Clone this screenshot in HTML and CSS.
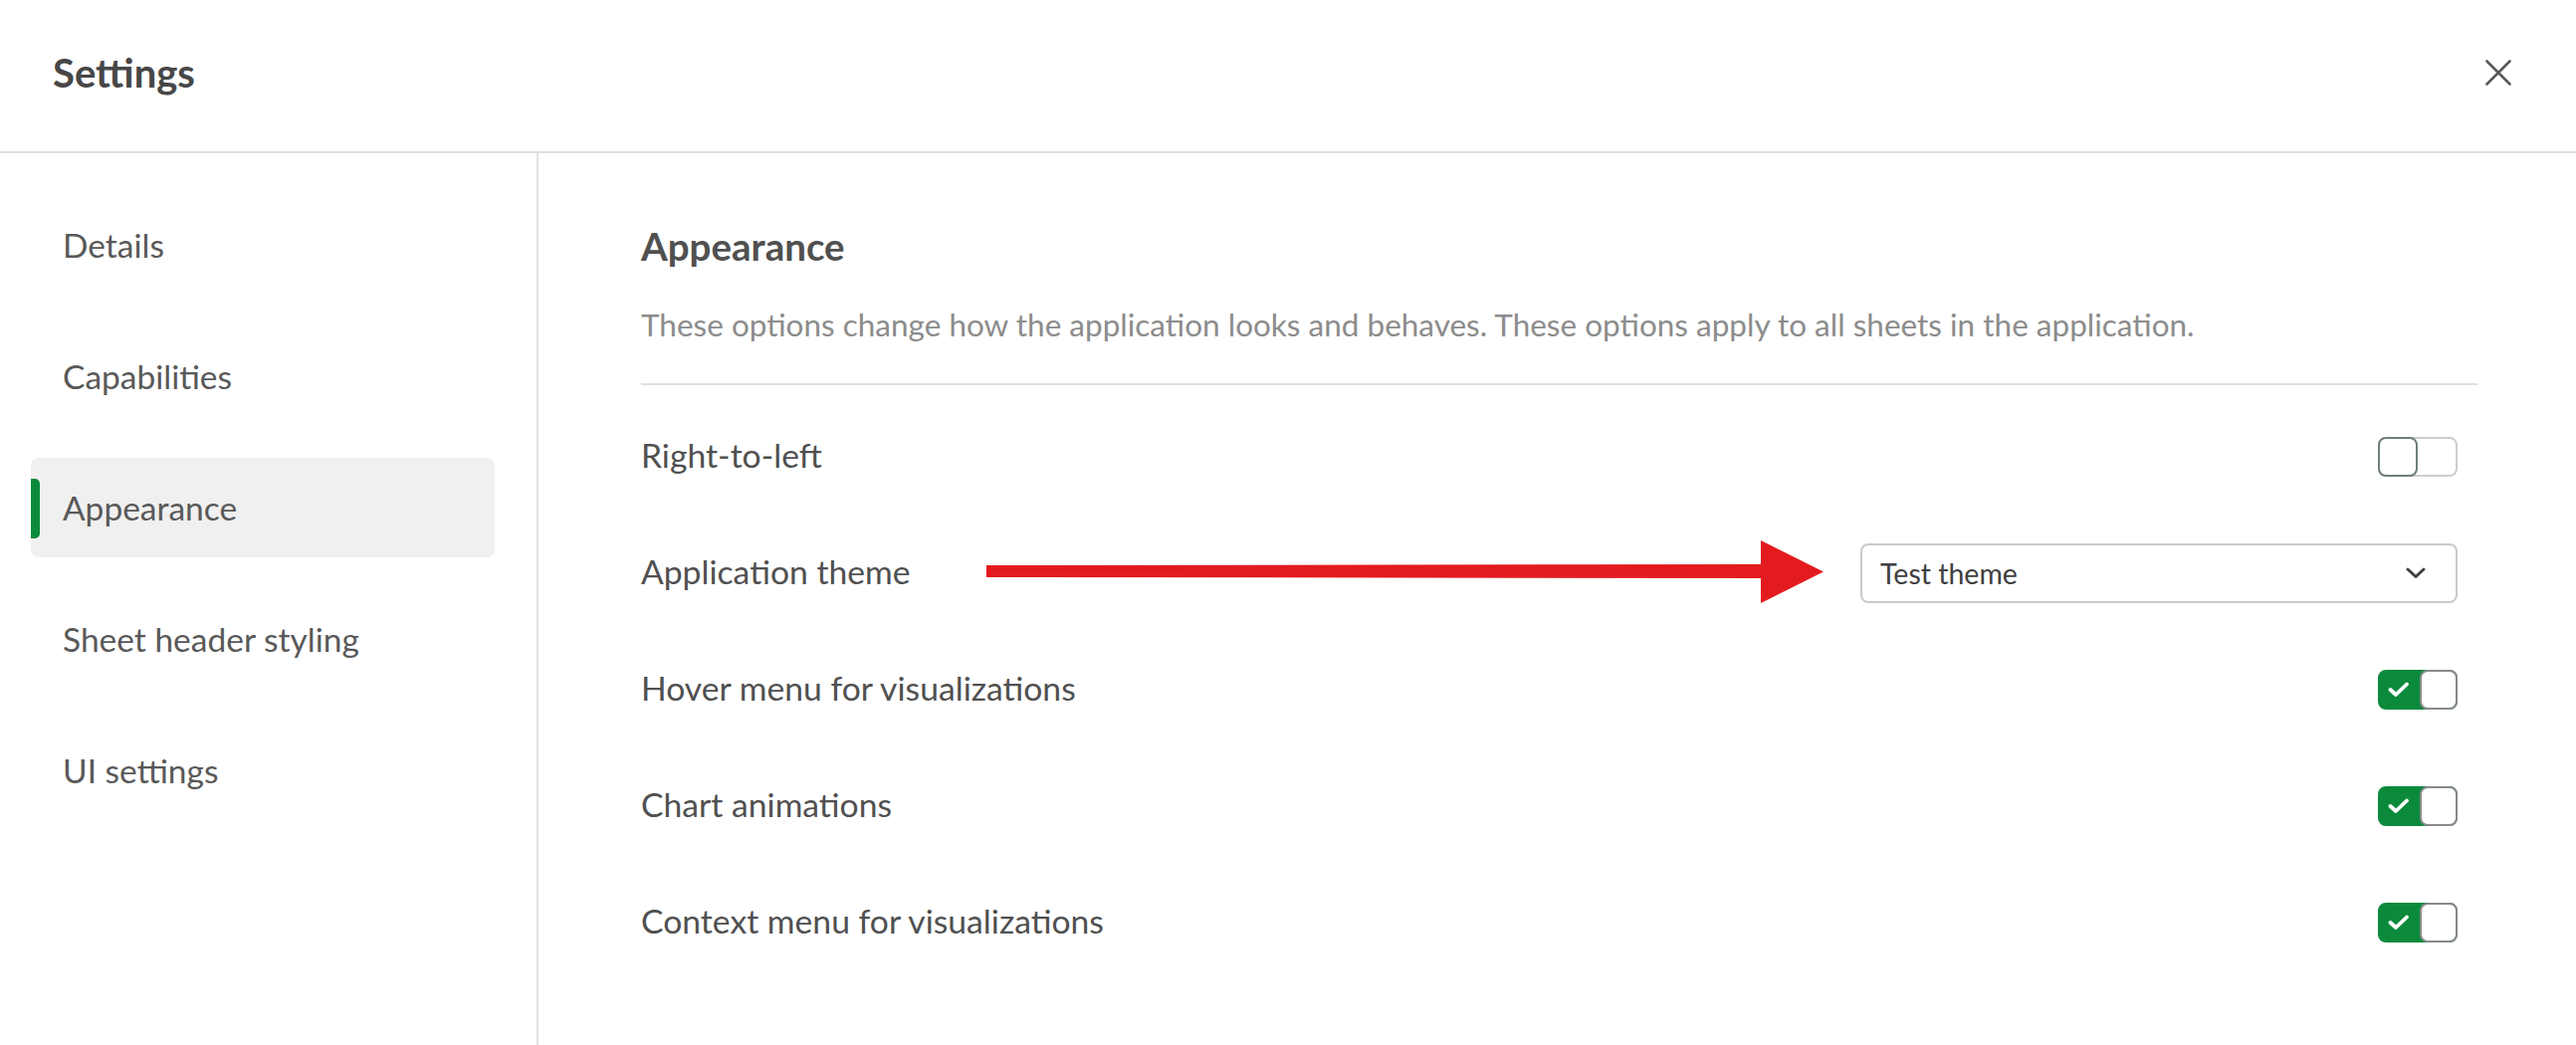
FILE: index.html
```html
<!DOCTYPE html>
<html>
<head>
    <title>Settings</title>
    <meta name="viewport" content="width=device-width, initial-scale=1">
    <link rel="stylesheet" href="styles.css">
</head>

<body>
    <div class="dialog">
        <header class="dialog-header">
            <h1>Settings</h1>
            <button class="close-btn" type="button" aria-label="Close">
                <svg width="26" height="26" viewBox="0 0 26 26">
                    <path d="M1.5 1.5 L24.5 24.5 M24.5 1.5 L1.5 24.5" stroke="#595959" stroke-width="2.6" stroke-linecap="round"/>
                </svg>
            </button>
        </header>

        <div class="dialog-body">
            <nav class="sidebar">
                <div class="nav-item">Details</div>
                <div class="nav-item">Capabilities</div>
                <div class="nav-item active">Appearance</div>
                <div class="nav-item">Sheet header styling</div>
                <div class="nav-item">UI settings</div>
            </nav>

            <main class="content">
                <div class="section-head">
                    <h2>Appearance</h2>
                    <p>These options change how the application looks and behaves. These options apply to all sheets in the application.</p>
                </div>

                <div class="row">
                    <span class="label">Right-to-left</span>
                    <span class="toggle"><span class="knob"></span></span>
                </div>

                <div class="row">
                    <span class="label">Application theme</span>
                    <svg class="pointer" width="841" height="63" viewBox="0 0 841 63">
                        <path d="M0 25 L786 24 L786 38 L0 37 Z" fill="#e31b1f"/>
                        <path d="M778 0 L841 31.5 L778 63 Z" fill="#e31b1f"/>
                    </svg>
                    <div class="select">
                        <span>Test theme</span>
                        <svg width="20" height="12" viewBox="0 0 20 12">
                            <path d="M2 2 L10 9.5 L18 2" fill="none" stroke="#404040" stroke-width="3" stroke-linecap="round" stroke-linejoin="round"/>
                        </svg>
                    </div>
                </div>

                <div class="row">
                    <span class="label">Hover menu for visualizations</span>
                    <span class="toggle on">
                        <span class="check"><svg width="22" height="17" viewBox="0 0 22 17"><path d="M2.5 9 L8 14 L19 3.5" fill="none" stroke="#fff" stroke-width="3.8" stroke-linecap="round" stroke-linejoin="round"/></svg></span>
                        <span class="knob"></span>
                    </span>
                </div>

                <div class="row">
                    <span class="label">Chart animations</span>
                    <span class="toggle on">
                        <span class="check"><svg width="22" height="17" viewBox="0 0 22 17"><path d="M2.5 9 L8 14 L19 3.5" fill="none" stroke="#fff" stroke-width="3.8" stroke-linecap="round" stroke-linejoin="round"/></svg></span>
                        <span class="knob"></span>
                    </span>
                </div>

                <div class="row">
                    <span class="label">Context menu for visualizations</span>
                    <span class="toggle on">
                        <span class="check"><svg width="22" height="17" viewBox="0 0 22 17"><path d="M2.5 9 L8 14 L19 3.5" fill="none" stroke="#fff" stroke-width="3.8" stroke-linecap="round" stroke-linejoin="round"/></svg></span>
                        <span class="knob"></span>
                    </span>
                </div>
            </main>
        </div>
    </div>
</body>
</html>
```

FILE: styles.css
```css
body {
    margin: 0;
    font-family: Lato, "Liberation Sans", sans-serif;
    color: #404040;
    background: #fff;
}

.dialog {
    display: flex;
    flex-direction: column;
    height: 1050px;
}

.dialog-header {
    display: flex;
    align-items: center;
    justify-content: space-between;
    height: 154px;
    box-sizing: border-box;
    padding: 0 65px 6px 53px;
    border-bottom: 2px solid #e0e0e0;
}

.dialog-header h1 {
    margin: 0;
    font-size: 40px;
    font-weight: 700;
    color: #474747;
}

.close-btn {
    background: none;
    border: none;
    padding: 0;
    display: flex;
    cursor: pointer;
}

.dialog-body {
    display: flex;
    flex: 1;
}

.sidebar {
    width: 541px;
    box-sizing: border-box;
    border-right: 2px solid #e0e0e0;
    padding: 42px 42px 0 31px;
    display: flex;
    flex-direction: column;
    gap: 32px;
}

.nav-item {
    height: 100px;
    display: flex;
    align-items: center;
    padding-left: 32px;
    font-size: 33.5px;
    color: #595959;
    border-radius: 8px;
    position: relative;
}

.nav-item.active {
    background: #f0f0f0;
}

.nav-item.active::before {
    content: "";
    position: absolute;
    left: 0;
    top: 21px;
    width: 9px;
    height: 60px;
    border-radius: 0 5px 5px 0;
    background: #0c8a3c;
}

.content {
    flex: 1;
    padding: 69px 99px 0 103px;
}

.section-head {
    border-bottom: 2px solid #e0e0e0;
    padding-bottom: 39px;
    margin-bottom: 13px;
}

.section-head h2 {
    margin: 0;
    font-size: 38.5px;
    line-height: 48px;
    font-weight: 700;
    color: #505050;
}

.section-head p {
    margin: 35px 0 0;
    font-size: 31.5px;
    line-height: 40px;
    color: #8c8c8c;
}

.row {
    height: 117px;
    display: flex;
    align-items: center;
    justify-content: space-between;
    padding-right: 20px;
    position: relative;
}

.label {
    font-size: 33.7px;
    color: #505050;
    margin-top: -3px;
}

.pointer {
    position: absolute;
    left: 347px;
    top: 26px;
}

.select {
    width: 600px;
    height: 60px;
    box-sizing: border-box;
    border: 2px solid #cacaca;
    border-radius: 8px;
    display: flex;
    align-items: center;
    justify-content: space-between;
    padding: 0 30px 0 18px;
    font-size: 28.5px;
    color: #404040;
}

.toggle {
    width: 80px;
    height: 40px;
    box-sizing: border-box;
    border: 2px solid #cdcdcd;
    border-radius: 8px;
    background: #fff;
    display: flex;
}

.toggle .knob {
    width: 40px;
    height: 40px;
    box-sizing: border-box;
    margin: -2px 0 -2px -2px;
    border: 2px solid #6f7f76;
    border-radius: 8px;
    background: #fff;
}

.toggle.on {
    background: #0c8a3c;
    border-color: #0c8a3c;
}

.toggle.on .check {
    flex: 1;
    display: flex;
    align-items: center;
    justify-content: center;
    padding-right: 2px;
}

.toggle.on .knob {
    width: 38px;
    margin: -2px -2px -2px 0;
    border-color: #8a8a8a;
}
```
